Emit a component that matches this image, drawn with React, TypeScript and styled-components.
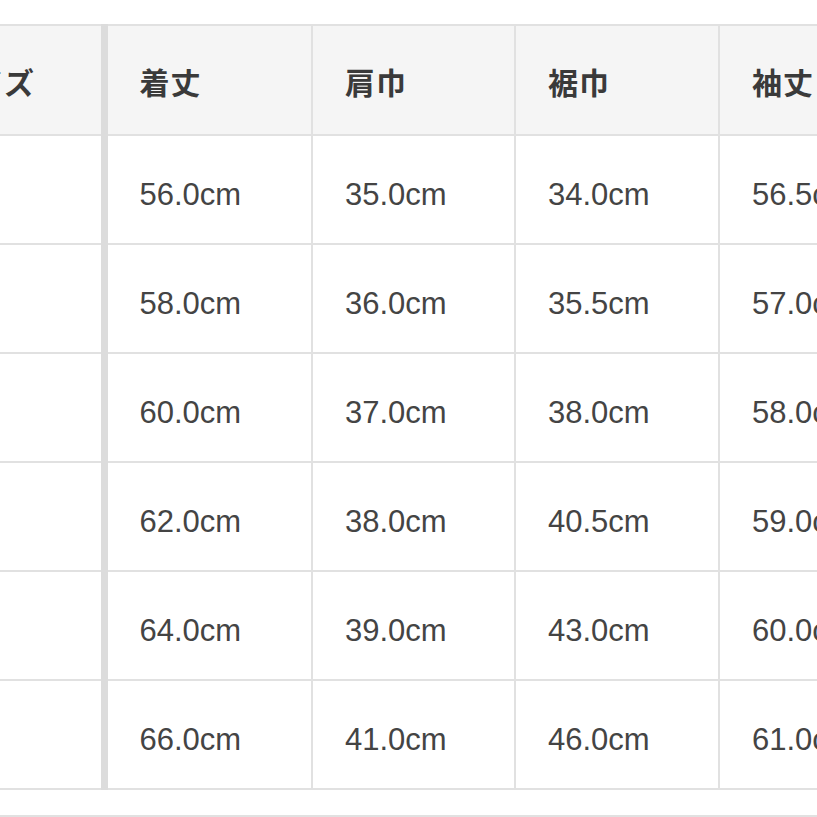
import React from 'react';
import styled, {createGlobalStyle} from 'styled-components';

const headers = ['サイズ', '着丈', '肩巾', '裾巾', '袖丈'];
const widths = [194, 208, 203, 204, 206];

const rows = [
  ['', '56.0cm', '35.0cm', '34.0cm', '56.5cm'],
  ['', '58.0cm', '36.0cm', '35.5cm', '57.0cm'],
  ['', '60.0cm', '37.0cm', '38.0cm', '58.0cm'],
  ['', '62.0cm', '38.0cm', '40.5cm', '59.0cm'],
  ['', '64.0cm', '39.0cm', '43.0cm', '60.0cm'],
  ['', '66.0cm', '41.0cm', '46.0cm', '61.0cm'],
];

const GlobalStyle = createGlobalStyle`
  html, body {
    margin: 0;
    padding: 0;
    background: #fff;
    overflow: hidden;
  }
  body {
    font-family: 'Liberation Sans', 'Noto Sans CJK JP', sans-serif;
  }
`;

const App = () => (
  <>
    <GlobalStyle />
    <Page>
      <SizeTable>
        <colgroup>
          {widths.map((w, i) => (
            <Col key={i} $w={w} />
          ))}
        </colgroup>
        <thead>
          <tr>
            {headers.map((h, i) => (
              <HeadCell key={h} $first={i === 0}>
                {h}
              </HeadCell>
            ))}
          </tr>
        </thead>
        <tbody>
          {rows.map((row, r) => (
            <tr key={r}>
              {row.map((v, i) => (
                <Cell key={i} $first={i === 0}>
                  {v}
                </Cell>
              ))}
            </tr>
          ))}
        </tbody>
      </SizeTable>
      <BottomRule />
    </Page>
  </>
);

const Page = styled.div`
  width: 817px;
  height: 817px;
  padding-top: 24px;
  box-sizing: border-box;
  overflow: hidden;
`;

const SizeTable = styled.table`
  table-layout: fixed;
  width: 1015px;
  margin-left: -91px;
  border-collapse: collapse;
  color: #404040;
`;

const Col = styled.col<{$w: number}>`
  width: ${p => p.$w}px;
`;

const HeadCell = styled.th<{$first?: boolean}>`
  height: 110px;
  padding: 2px 0 0 32px;
  box-sizing: border-box;
  text-align: left;
  background: #f5f5f5;
  border: 2px solid #e1e1e1;
  border-right: ${p => (p.$first ? '7px solid #dcdcdc' : '2px solid #e1e1e1')};
  font-family: 'Noto Sans CJK JP', sans-serif;
  font-size: 30px;
  font-weight: 700;
  letter-spacing: 1px;
  color: #3a3a3a;
`;

const Cell = styled.td<{$first?: boolean}>`
  height: 109px;
  padding: 10px 0 0 32px;
  box-sizing: border-box;
  text-align: left;
  border: 2px solid #e1e1e1;
  border-right: ${p => (p.$first ? '7px solid #dcdcdc' : '2px solid #e1e1e1')};
  font-family: 'Liberation Sans', Arial, sans-serif;
  font-size: 31px;
  color: #444;
`;

const BottomRule = styled.div`
  margin-top: 25px;
  height: 2px;
  background: #e1e1e1;
`;

export default App;
